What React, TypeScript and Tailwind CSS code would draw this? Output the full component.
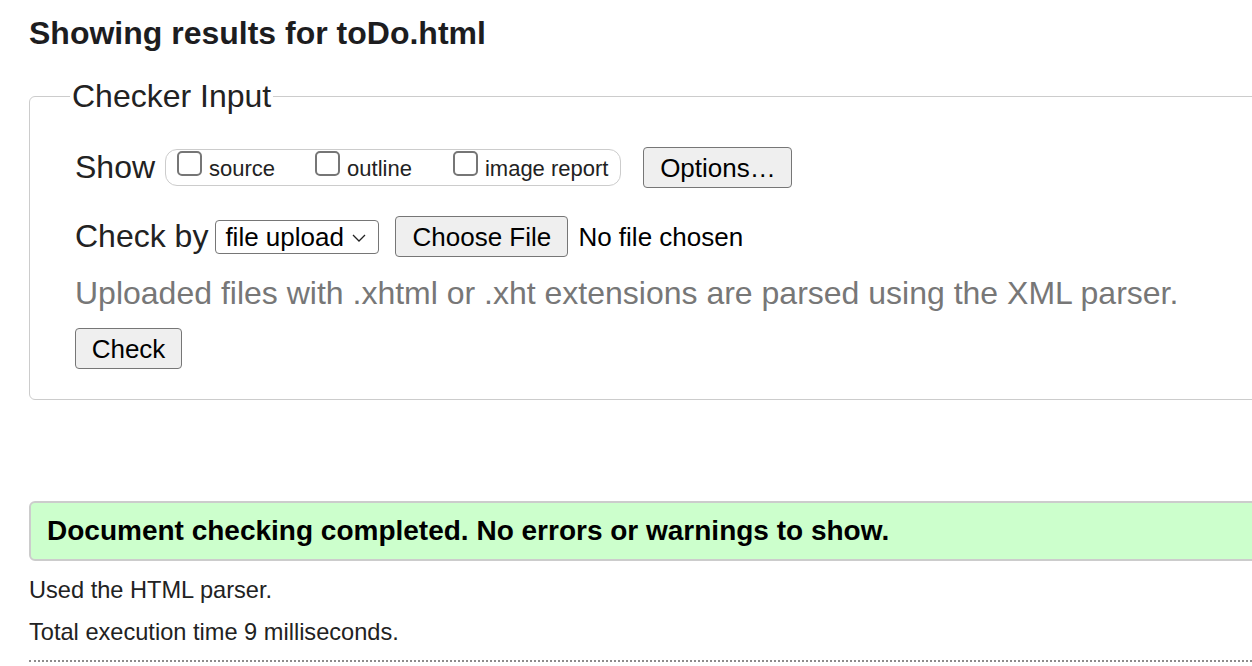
import React from 'react';

const Checkbox: React.FC<{ label: string }> = ({ label }) => (
    <label className="flex items-start">
        <span className="w-[25px] h-[25px] border-2 border-[#767676] rounded-[5px] bg-white"></span>
        <span className="ml-[7px] mt-[5px] text-[22px] leading-[25px]">{label}</span>
    </label>
);

const Button: React.FC<{ children: React.ReactNode; className?: string }> = ({ children, className }) => (
    <button className={`h-[41px] px-[15px] bg-[#efefef] border border-[#767676] rounded-[4px] text-[26px] leading-none text-black ${className ?? ''}`}>
        {children}
    </button>
);

export default function App() {
    return (
        <div className="w-[1252px] h-[666px] overflow-hidden bg-white text-[#222] font-['Liberation_Sans',Arial,sans-serif]">
            <div className="w-[1400px] pl-[29px]">

                {/* Heading */}
                <h1 className="pt-[15px] text-[32px] font-bold text-[#1d1d1f] leading-[37px]">
                    Showing results for toDo.html
                </h1>

                {/* Checker Input */}
                <fieldset className="mt-[26px] border border-[#cccccc] rounded-[6px] pl-[40px] pb-[30px]">
                    <legend className="px-[2px] text-[32px] leading-[37px]">Checker Input</legend>

                    <div className="pl-[5px] pt-[32px]">
                        {/* Show row */}
                        <div className="flex items-center h-[41px]">
                            <span className="text-[32px] leading-[37px]">Show</span>
                            <div className="ml-[10px] flex items-start h-[37px] pl-[11px] pr-[12px] pt-px border-[1.5px] border-[#cccccc] rounded-[12px]">
                                <Checkbox label="source" />
                                <div className="w-[40px]"></div>
                                <Checkbox label="outline" />
                                <div className="w-[41px]"></div>
                                <Checkbox label="image report" />
                            </div>
                            <Button className="ml-[22px] w-[149px]">Options…</Button>
                        </div>

                        {/* Check by row */}
                        <div className="flex items-center h-[41px] mt-[28px]">
                            <span className="text-[32px] leading-[37px]">Check by</span>
                            <div className="ml-[7px] w-[164px] h-[34px] border border-[#767676] rounded-[4px] bg-white flex items-center pl-[9px] pr-[12px] justify-between">
                                <span className="text-[26px] leading-none text-black">file upload</span>
                                <svg width="14" height="8" viewBox="0 0 14 8" className="mt-[2px]">
                                    <path d="M1 1l6 6 6-6" fill="none" stroke="#222" strokeWidth="1.3" />
                                </svg>
                            </div>
                            <Button className="ml-[16px] w-[173px]">Choose File</Button>
                            <span className="ml-[10px] text-[26px] leading-none text-black">No file chosen</span>
                        </div>

                        <p className="mt-[18px] text-[32px] leading-[37px] text-[#777777]">
                            Uploaded files with .xhtml or .xht extensions are parsed using the XML parser.
                        </p>

                        <Button className="mt-[16px] w-[107px]">Check</Button>
                    </div>
                </fieldset>

                {/* Result */}
                <div className="mt-[101px] h-[60px] flex items-center pl-[16px] bg-[#ccffcc] border-2 border-[#cccccc] rounded-l-[6px]">
                    <span className="text-[28px] font-bold text-black leading-none">
                        Document checking completed. No errors or warnings to show.
                    </span>
                </div>

                <p className="mt-[15px] text-[23.6px] leading-[28px]">Used the HTML parser.</p>
                <p className="mt-[14px] text-[23.6px] leading-[28px]">Total execution time 9 milliseconds.</p>

                <div className="mt-[14px] border-t-2 border-dotted border-[#8c8c8c]"></div>
            </div>
        </div>
    );
}
